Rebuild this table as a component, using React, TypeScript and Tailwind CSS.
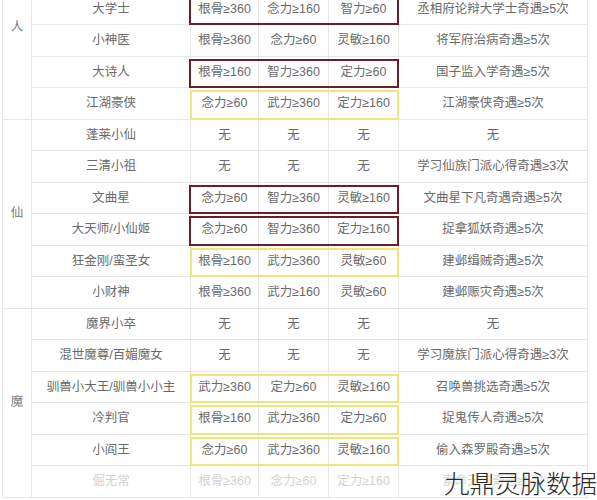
type Mark = "red" | "yellow" | null;

type Row = {
  name: string;
  stats: [string, string, string];
  reward: string;
  mark: Mark;
  faded?: boolean;
};

const groups: { label: string; height: string; pad: string; rows: Row[] }[] = [
  {
    label: "人",
    height: "h-[126px]",
    pad: "pt-[24px] items-start",
    rows: [
      { name: "大学士", stats: ["根骨≥360", "念力≥160", "智力≥60"], reward: "丞相府论辩大学士奇遇≥5次", mark: "red" },
      { name: "小神医", stats: ["根骨≥360", "念力≥60", "灵敏≥160"], reward: "将军府治病奇遇≥5次", mark: null },
      { name: "大诗人", stats: ["根骨≥160", "智力≥360", "定力≥60"], reward: "国子监入学奇遇≥5次", mark: "red" },
      { name: "江湖豪侠", stats: ["念力≥60", "武力≥360", "定力≥160"], reward: "江湖豪侠奇遇≥5次", mark: "yellow" },
    ],
  },
  {
    label: "仙",
    height: "h-[189px]",
    pad: "items-center",
    rows: [
      { name: "蓬莱小仙", stats: ["无", "无", "无"], reward: "无", mark: null },
      { name: "三清小祖", stats: ["无", "无", "无"], reward: "学习仙族门派心得奇遇≥3次", mark: null },
      { name: "文曲星", stats: ["念力≥60", "智力≥360", "灵敏≥160"], reward: "文曲星下凡奇遇奇遇≥5次", mark: "red" },
      { name: "大天师/小仙姬", stats: ["念力≥60", "智力≥360", "定力≥160"], reward: "捉拿狐妖奇遇≥5次", mark: "red" },
      { name: "狂金刚/蛮圣女", stats: ["根骨≥160", "武力≥360", "灵敏≥60"], reward: "建邺缉贼奇遇≥5次", mark: "yellow" },
      { name: "小财神", stats: ["根骨≥360", "武力≥160", "灵敏≥60"], reward: "建邺赈灾奇遇≥5次", mark: null },
    ],
  },
  {
    label: "魔",
    height: "h-[189px]",
    pad: "items-center",
    rows: [
      { name: "魔界小卒", stats: ["无", "无", "无"], reward: "无", mark: null },
      { name: "混世魔尊/百媚魔女", stats: ["无", "无", "无"], reward: "学习魔族门派心得奇遇≥3次", mark: null },
      { name: "驯兽小大王/驯兽小小主", stats: ["武力≥360", "定力≥60", "灵敏≥160"], reward: "召唤兽挑选奇遇≥5次", mark: "yellow" },
      { name: "冷判官", stats: ["根骨≥160", "武力≥360", "定力≥60"], reward: "捉鬼传人奇遇≥5次", mark: "yellow" },
      { name: "小阎王", stats: ["念力≥60", "武力≥360", "灵敏≥160"], reward: "偷入森罗殿奇遇≥5次", mark: "yellow" },
      { name: "倔无常", stats: ["根骨≥360", "念力≥60", "定力≥160"], reward: "索命无常奇遇≥5次", mark: null, faded: true },
    ],
  },
];

const statWidths = ["w-[68px]", "w-[70px]", "w-[70px]"];

function TableRow({ row }: { row: Row }) {
  const tone = row.faded ? "text-[#d2d2d2]" : "text-[#6a6a6a]";
  return (
    <div className={`flex h-[31.5px] border-b border-[#e6e6e6] ${tone}`}>
      <div className="flex w-[159px] items-center justify-center border-l border-[#e6e6e6] pt-[1px]">
        {row.name}
      </div>
      <div className="relative flex">
        {row.stats.map((s, i) => (
          <div
            key={i}
            className={`flex ${statWidths[i]} items-center justify-center border-l border-[#e6e6e6] pt-[1px]`}
          >
            {s}
          </div>
        ))}
        {row.mark === "red" && (
          <div className="pointer-events-none absolute -bottom-[1px] -left-[1px] -right-[1px] top-[2px] border-2 border-[#6e1d26]" />
        )}
        {row.mark === "yellow" && (
          <div className="pointer-events-none absolute -bottom-[1px] left-0 -right-[1px] top-[2px] border-2 border-[#ede67a]" />
        )}
      </div>
      <div className="flex flex-1 items-center justify-center border-l border-[#e6e6e6] pt-[1px]">
        {row.reward}
      </div>
    </div>
  );
}

export default function App() {
  return (
    <div
      className="relative h-[500px] w-[597px] overflow-hidden bg-white text-[12.5px] leading-[19px]"
      style={{ fontFamily: '"Liberation Sans", "Noto Sans CJK SC", sans-serif' }}
    >
      <div className="ml-[2px] -mt-[6.5px] w-[586px] border-l border-r border-[#e6e6e6]">
        {groups.map((g) => (
          <div key={g.label} className="flex">
            <div
              className={`flex w-[28px] shrink-0 justify-center border-b border-[#e6e6e6] text-[#7a7a7a] ${g.height} ${g.pad}`}
            >
              {g.label}
            </div>
            <div className="flex-1">
              {g.rows.map((r) => (
                <TableRow key={r.name} row={r} />
              ))}
            </div>
          </div>
        ))}
      </div>

      {/* watermark */}
      <div
        className="absolute bottom-[3px] right-0 text-[25.5px] font-light leading-[30px] text-[#2a2a2a] [text-shadow:0_0_3px_#fff,0_0_3px_#fff]"
        style={{ fontFamily: '"Noto Sans CJK SC", sans-serif' }}
      >
        九鼎灵脉数据
      </div>
    </div>
  );
}
